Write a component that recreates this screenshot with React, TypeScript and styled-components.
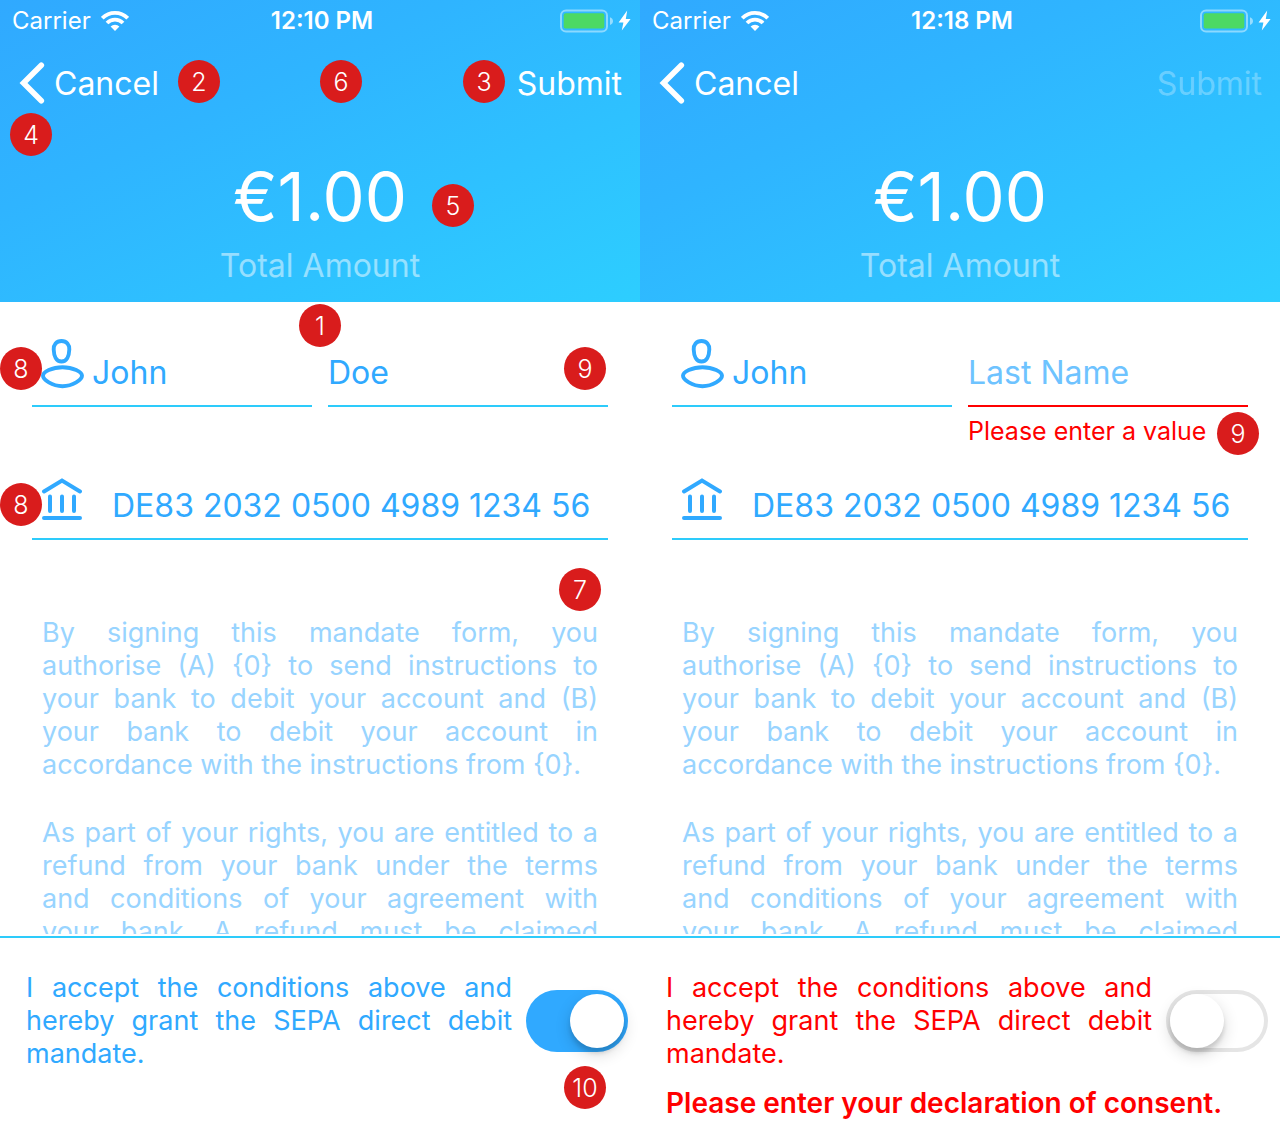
import React, { useId, useState } from "react";
import styled, { createGlobalStyle } from "styled-components";

const BLUE = "#30a9ff";
const CYAN = "#2dcbfb";
const RED = "#ff0000";

const GlobalStyle = createGlobalStyle`
  * { box-sizing: border-box; }
  body {
    margin: 0;
    background: #ffffff;
    font-family: Inter, "Liberation Sans", sans-serif;
  }
`;

const Page = styled.main`
  display: grid;
  grid-template-columns: 1fr 1fr;
  height: 100vh;
`;

const Screen = styled.form`
  position: relative;
  display: flex;
  flex-direction: column;
  min-width: 0;
  min-height: 0;
`;

const Header = styled.header`
  background: linear-gradient(155deg, #30a9ff 0%, #2fb4ff 35%, #2dceff 100%);
  color: #ffffff;
  padding-bottom: 14px;
`;

const StatusBar = styled.div`
  display: grid;
  grid-template-columns: 1fr auto 1fr;
  align-items: center;
  height: 41px;
  padding: 0 8px 0 12px;
  font-size: 24px;
`;

const StatusGroup = styled.div<{ $end?: boolean }>`
  display: flex;
  align-items: center;
  justify-content: ${(p) => (p.$end ? "flex-end" : "flex-start")};
  gap: ${(p) => (p.$end ? "0" : "10px")};
`;

const Clock = styled.span`
  font-weight: 600;
`;

const NavBar = styled.nav`
  display: flex;
  align-items: center;
  justify-content: space-between;
  height: 84px;
  padding: 0 18px;
`;

const NavButton = styled.button`
  display: flex;
  align-items: center;
  gap: 8px;
  padding: 0;
  border: 0;
  background: none;
  color: #ffffff;
  font: inherit;
  font-size: 32px;

  &:disabled {
    color: rgba(255, 255, 255, 0.3);
  }
`;

const Amount = styled.div`
  padding-top: 30px;
  font-size: 67px;
  line-height: 84px;
  text-align: center;
`;

const AmountLabel = styled.div`
  padding-top: 5px;
  color: rgba(255, 255, 255, 0.5);
  font-size: 32px;
  line-height: 44px;
  text-align: center;
`;

const Fields = styled.div`
  display: grid;
  grid-template-columns: 1fr 1fr;
  gap: 16px;
  padding: 36px 32px 0;
`;

const FieldCell = styled.div<{ $wide?: boolean }>`
  grid-column: ${(p) => (p.$wide ? "1 / -1" : "auto")};
  min-width: 0;
`;

const FieldBox = styled.div<{ $invalid?: boolean; $gap: number }>`
  display: flex;
  align-items: flex-start;
  gap: ${(p) => p.$gap}px;
  padding-bottom: 11px;
  border-bottom: 2px solid ${(p) => (p.$invalid ? RED : CYAN)};
`;

const FieldIcon = styled.svg`
  flex: none;
  width: 44px;
  height: 52px;
  margin-left: 8px;
`;

const Input = styled.input`
  flex: 1;
  width: 100%;
  min-width: 0;
  height: 44px;
  margin-top: 12px;
  padding: 0;
  border: 0;
  outline: 0;
  background: none;
  color: ${BLUE};
  font: inherit;
  font-size: 32px;

  &::placeholder {
    color: #6ec3ff;
    opacity: 1;
  }
`;

const FieldError = styled.div`
  height: 48px;
  padding-top: 8px;
  color: ${RED};
  font-size: 25px;
  line-height: 33px;
  white-space: nowrap;
`;

const Mandate = styled.section`
  display: flex;
  flex: 1 1 0;
  flex-direction: column;
  gap: 35px;
  min-height: 0;
  margin-bottom: 2px;
  padding: 76px 42px 0;
  overflow-y: auto;
  scrollbar-width: none;
`;

const Paragraph = styled.p<{ $full?: boolean }>`
  flex: none;
  margin: 0;
  color: #98d4ff;
  font-size: 27px;
  line-height: 33px;
  text-align: justify;
  text-align-last: ${(p) => (p.$full ? "justify" : "auto")};
`;

const Footer = styled.footer`
  border-top: 2px solid ${CYAN};
  padding: 33px 12px 16px 26px;
`;

const ConsentRow = styled.div`
  display: flex;
  align-items: center;
  gap: 14px;
`;

const ConsentLabel = styled.label<{ $invalid?: boolean }>`
  flex: 1;
  color: ${(p) => (p.$invalid ? RED : BLUE)};
  font-size: 27px;
  line-height: 33px;
  text-align: justify;
`;

const Switch = styled.input`
  appearance: none;
  flex: none;
  display: flex;
  align-items: center;
  width: 102px;
  height: 62px;
  margin: 0;
  padding: 0 4px;
  border-radius: 31px;
  background: #ffffff;
  box-shadow: inset 0 0 0 4px #e5e5e5;

  &::before {
    content: "";
    width: 54px;
    height: 54px;
    border-radius: 50%;
    background: #ffffff;
    box-shadow: 0 6px 16px rgba(0, 0, 0, 0.16), 0 5px 4px rgba(0, 0, 0, 0.12);
  }

  &:checked {
    justify-content: flex-end;
    background: ${BLUE};
    box-shadow: none;
  }
`;

const ConsentError = styled.div`
  height: 50px;
  padding-top: 17px;
  color: ${RED};
  font-size: 28px;
  font-weight: 600;
  line-height: 33px;
  white-space: nowrap;
`;

const Badge = styled.span<{ $x: number; $y: number }>`
  position: absolute;
  left: ${(p) => p.$x}px;
  top: ${(p) => p.$y}px;
  display: flex;
  align-items: center;
  justify-content: center;
  width: 42px;
  height: 43px;
  border-radius: 50%;
  background: #d91c1c;
  color: #ffffff;
  font-size: 25px;
  font-weight: 300;
`;

const WifiIcon = () => (
  <svg width="28" height="20" viewBox="0 0 28 20" aria-hidden="true">
    <g fill="none" stroke="#fff" strokeWidth="3.8">
      <path d="M1.3 7.2a18 18 0 0 1 25.4 0" />
      <path d="M6 12a11.3 11.3 0 0 1 16 0" />
    </g>
    <path d="M14 20l-4.4-4.4a6.3 6.3 0 0 1 8.8 0z" fill="#fff" />
  </svg>
);

const BatteryIcon = () => (
  <svg width="72" height="24" viewBox="0 0 72 24" aria-hidden="true">
    <rect x="1" y="1.5" width="46" height="21" rx="5" fill="none" stroke="#fff" strokeOpacity=".45" strokeWidth="2" />
    <rect x="3.7" y="4.2" width="40.6" height="15.4" rx="2" fill="#4cd964" />
    <path d="M50 8.2c4 1.4 4 6.4 0 7.8z" fill="#fff" fillOpacity=".5" />
    <path d="M67.2 1.5L58.6 13.4h4.8L61.8 21.5l8.8-11.6h-4.8z" fill="#fff" />
  </svg>
);

const ChevronIcon = () => (
  <svg width="28" height="42" viewBox="0 0 28 42" aria-hidden="true">
    <path d="M23.3 3.3L5.5 21l17.8 17.7" fill="none" stroke="#fff" strokeWidth="5.6" strokeLinecap="round" strokeLinejoin="miter" />
  </svg>
);

const PersonIcon = () => (
  <FieldIcon viewBox="0 0 44 52" aria-hidden="true">
    <g fill="none" stroke={BLUE} strokeWidth="3.9" strokeLinejoin="round">
      <path d="M21.5 3c5.3 0 8 3.8 7.8 8.5-.2 6.5-2.5 12-7.8 12s-7.6-5.5-7.8-12C13.5 6.8 16.2 3 21.5 3z" />
      <path d="M3 37.8c0-3.8 9-8.6 19.500-8.6S42 34 42 37.8C42 41.500 33 48.2 22.500 48.2S3 41.500 3 37.8z" />
    </g>
  </FieldIcon>
);

const BankIcon = () => (
  <FieldIcon viewBox="0 0 44 52" aria-hidden="true">
    <g fill="none" stroke={BLUE} strokeWidth="4" strokeLinecap="round" strokeLinejoin="miter">
      <path d="M4 20.5L22 9.5l18 11M4 47h36" />
      <path d="M10 25.5V40M22 25.5V40M34 25.5V40" />
    </g>
  </FieldIcon>
);

const MANDATE_TEXT =
  "By signing this mandate form, you authorise (A) {0} to send instructions to your bank to debit your account and (B) your bank to debit your account in accordance with the instructions from {0}.";

const REFUND_TEXT =
  "As part of your rights, you are entitled to a refund from your bank under the terms and\u00a0conditions of your agreement with your\u00a0bank. A refund must be claimed";

type Marker = { n: number; x: number; y: number };

type MandateScreenProps = {
  time: string;
  lastName: string;
  complete: boolean;
  markers: Marker[];
};

function MandateScreen({ time, lastName, complete, markers }: MandateScreenProps) {
  const consentId = useId();
  const [accepted, setAccepted] = useState(complete);

  return (
    <Screen onSubmit={(e) => e.preventDefault()}>
      <Header>
        <StatusBar>
          <StatusGroup>
            <span>Carrier</span>
            <WifiIcon />
          </StatusGroup>
          <Clock>{time}</Clock>
          <StatusGroup $end>
            <BatteryIcon />
          </StatusGroup>
        </StatusBar>
        <NavBar>
          <NavButton type="button">
            <ChevronIcon />
            Cancel
          </NavButton>
          <NavButton type="submit" disabled={!complete}>
            Submit
          </NavButton>
        </NavBar>
        <Amount>€1.00</Amount>
        <AmountLabel>Total Amount</AmountLabel>
      </Header>

      <Fields>
        <FieldCell>
          <FieldBox $gap={8}>
            <PersonIcon />
            <Input aria-label="First Name" defaultValue="John" />
          </FieldBox>
        </FieldCell>
        <FieldCell>
          <FieldBox $gap={0} $invalid={!complete}>
            <Input aria-label="Last Name" placeholder="Last Name" defaultValue={lastName} />
          </FieldBox>
          <FieldError>{complete ? null : "Please enter a value"}</FieldError>
        </FieldCell>
        <FieldCell $wide>
          <FieldBox $gap={28}>
            <BankIcon />
            <Input aria-label="IBAN" defaultValue="DE83 2032 0500 4989 1234 56" />
          </FieldBox>
        </FieldCell>
      </Fields>

      <Mandate>
        <Paragraph>{MANDATE_TEXT}</Paragraph>
        <Paragraph $full>{REFUND_TEXT}</Paragraph>
      </Mandate>

      <Footer>
        <ConsentRow>
          <ConsentLabel htmlFor={consentId} $invalid={!complete}>
            I accept the conditions above and hereby grant the SEPA direct debit mandate.
          </ConsentLabel>
          <Switch
            id={consentId}
            type="checkbox"
            role="switch"
            checked={accepted}
            onChange={(e) => setAccepted(e.target.checked)}
          />
        </ConsentRow>
        <ConsentError>{complete ? null : "Please enter your declaration of consent."}</ConsentError>
      </Footer>

      {markers.map((m) => (
        <Badge key={`${m.n}-${m.y}`} $x={m.x} $y={m.y}>
          {m.n}
        </Badge>
      ))}
    </Screen>
  );
}

const filledMarkers: Marker[] = [
  { n: 2, x: 178, y: 60 },
  { n: 6, x: 320, y: 60 },
  { n: 3, x: 463, y: 60 },
  { n: 4, x: 10, y: 113 },
  { n: 5, x: 432, y: 184 },
  { n: 1, x: 299, y: 304 },
  { n: 8, x: 0, y: 347 },
  { n: 9, x: 564, y: 347 },
  { n: 8, x: 0, y: 483 },
  { n: 7, x: 559, y: 568 },
  { n: 10, x: 564, y: 1066 },
];

const errorMarkers: Marker[] = [{ n: 9, x: 577, y: 412 }];

export default function App() {
  return (
    <>
      <GlobalStyle />
      <Page>
        <MandateScreen time="12:10 PM" lastName="Doe" complete markers={filledMarkers} />
        <MandateScreen time="12:18 PM" lastName="" complete={false} markers={errorMarkers} />
      </Page>
    </>
  );
}
